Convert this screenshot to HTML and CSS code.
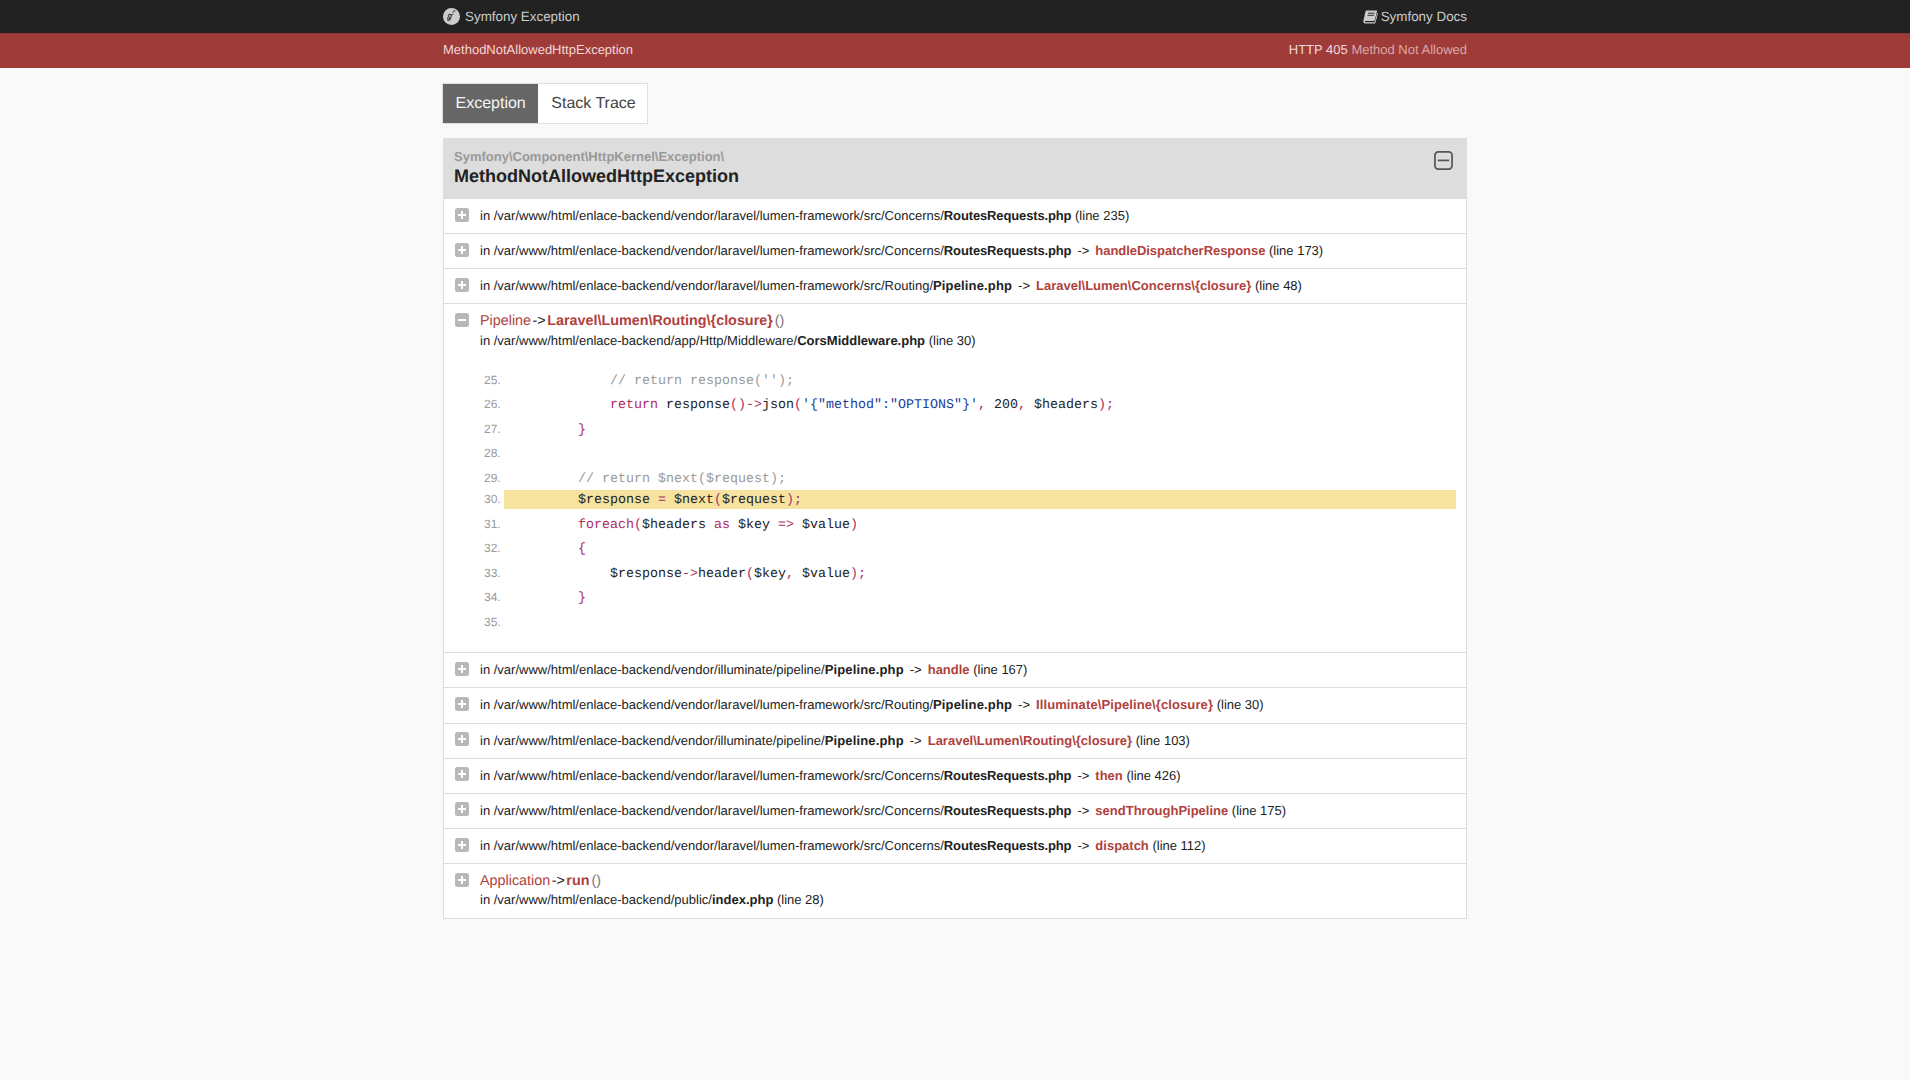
FILE: index.html
```html
<!DOCTYPE html>
<html lang="en">
<head>
<meta charset="utf-8">
<title>Symfony Exception</title>
<link rel="stylesheet" href="styles.css">
</head>
<body>
<div class="page">
<header class="top">
  <div class="container between">
    <span class="brand">
      <svg class="sf" viewBox="0 0 32 32"><circle cx="16" cy="16" r="16" fill="#ccc"/><path d="M23.6 5.600c-1.900.1-3.500.9-4.600 2.300-1.300 1.400-2.100 3.200-2.700 5-1.100-.9-1.900-1.500-3-1.700-.9-.2-1.800-.1-2.500.4-.8.6-1.200 1.400-1.400 2.300-.2 1 .2 2 .7 2.800l1 1.200c.3.3.6.7.4 1.300-.2.7-.9 1.100-1.700 1-.7-.2-.9-.6-.4-1.300.2-.3.5-.4.4-.7-.1-.4-.9-.4-1.300-.1-.9.6-1 1.800-.5 2.600.6 1 2.100 1.300 3.200.8 1.400-.6 2.200-2.300 1.700-3.700-.3-1-1.200-1.600-1.800-2.500-.4-.6-.7-1.500-.2-2.200.3-.4.9-.7 1.500-.5.8.2 1.600 1 2.400 1.800-.6 2.200-1.100 4.400-2 6.400-.6 1.400-1.200 3-2.900 3.200-.2 0-.2-.2-.2-.4.1-.5.3-.7-.1-1-.4-.3-1-.1-1.200.4-.2.7.5 1.400 1.500 1.400 1.600 0 2.900-1.100 3.700-2.400 1.100-1.700 1.700-3.700 2.300-5.700.4-1.300.7-2.600 1-3.900h2.700c.5 0 .8-.3.8-.7h-3.200c.4-1.800 1-3.700 1.900-5.200.4-.7 1-1.400 1.800-1.600.5-.1.7.1.6.5-.1.4-.3.6 0 .9.4.4 1.100.2 1.400-.3.3-.9-.6-1.500-1.600-1.400z" fill="#222" stroke="#222" stroke-width=".3"/></svg>
      <span>Symfony Exception</span>
    </span>
    <span class="brand docs">
      <svg class="book" viewBox="0 0 15 14"><path d="M3.600.5h9.600c.7 0 1 .5.8 1.100l-2.200 8.300c-.2.700-.6 1-1.300 1H2.600c-.6 0-.9.300-.8.700.1.400.4.600.9.600h8.500c.4 0 .6-.2.700-.5l2.300-8.700.7.500-2.300 8.700c-.2.800-.7 1.300-1.500 1.300H2.500C1.200 13.500.2 12.500.3 11.200c0-.2 0-.4.1-.6L2.400 1.700C2.600 1 3 .5 3.600.5z" fill="#ccc"/><path d="M5 3.200h6.600M4.500 5.300h6.600" stroke="#222" stroke-width=".9"/></svg>
      <span>Symfony Docs</span>
    </span>
  </div>
</header>
<div class="summary">
  <div class="container between">
    <span>MethodNotAllowedHttpException</span>
    <span>HTTP 405 <span class="status">Method Not Allowed</span></span>
  </div>
</div>
<main class="container">
  <nav class="tabs">
    <span class="tab active">Exception</span>
    <span class="tab">Stack Trace</span>
  </nav>
  <section class="trace">
    <div class="trace-head">
      <div>
        <div class="ns">Symfony\Component\HttpKernel\Exception\</div>
        <div class="cls">MethodNotAllowedHttpException</div>
      </div>
      <svg class="toggle-all" viewBox="0 0 20 20"><rect x="1" y="1" width="18" height="18" rx="3.500" fill="none" stroke="#555" stroke-width="1.800"/><rect x="4" y="9" width="12" height="1.800" fill="#555"/></svg>
    </div>

    <div class="row"><span class="ico plus"></span><div class="line">in /var/www/html/enlace-backend/vendor/laravel/lumen-framework/src/Concerns/<b class="routes">RoutesRequests.php</b> (line 235)</div></div>
    <div class="row"><span class="ico plus"></span><div class="line">in /var/www/html/enlace-backend/vendor/laravel/lumen-framework/src/Concerns/<b class="routes">RoutesRequests.php</b><span class="arrow">-&gt;</span><b class="fn tight">handleDispatcherResponse</b> (line 173)</div></div>
    <div class="row"><span class="ico plus"></span><div class="line">in /var/www/html/enlace-backend/vendor/laravel/lumen-framework/src/Routing/<b class="pipe">Pipeline.php</b><span class="arrow">-&gt;</span><b class="fn">Laravel\Lumen\Concerns\{closure}</b> (line 48)</div></div>

    <div class="row open"><span class="ico minus"></span>
      <div class="body">
        <div class="call"><span class="cl">Pipeline</span><span class="ar">-&gt;</span><b class="fn">Laravel\Lumen\Routing\{closure}</b><span class="pa">()</span></div>
        <div class="line">in /var/www/html/enlace-backend/app/Http/Middleware/<b>CorsMiddleware.php</b> (line 30)</div>
        <ol class="code" start="25">
          <li><code class="c">            // return response('');</code></li>
          <li><code>            <i>return</i> response<i>()-&gt;</i>json<i>(</i><u>'{"method":"OPTIONS"}'</u><i>,</i> 200<i>,</i> $headers<i>);</i></code></li>
          <li><code>        <i>}</i></code></li>
          <li><code> </code></li>
          <li class="before-sel"><code class="c">        // return $next($request);</code></li>
          <li class="sel"><code>        $response <i>=</i> $next<i>(</i>$request<i>);</i></code></li>
          <li><code>        <i>foreach(</i>$headers <i>as</i> $key <i>=&gt;</i> $value<i>)</i></code></li>
          <li><code>        <i>{</i></code></li>
          <li><code>            $response<i>-&gt;</i>header<i>(</i>$key<i>,</i> $value<i>);</i></code></li>
          <li><code>        <i>}</i></code></li>
          <li><code> </code></li>
        </ol>
      </div>
    </div>

    <div class="row"><span class="ico plus"></span><div class="line">in /var/www/html/enlace-backend/vendor/illuminate/pipeline/<b class="pipe">Pipeline.php</b><span class="arrow">-&gt;</span><b class="fn">handle</b> (line 167)</div></div>
    <div class="row"><span class="ico plus"></span><div class="line">in /var/www/html/enlace-backend/vendor/laravel/lumen-framework/src/Routing/<b class="pipe">Pipeline.php</b><span class="arrow">-&gt;</span><b class="fn wide">Illuminate\Pipeline\{closure}</b> (line 30)</div></div>
    <div class="row"><span class="ico plus"></span><div class="line">in /var/www/html/enlace-backend/vendor/illuminate/pipeline/<b class="pipe">Pipeline.php</b><span class="arrow">-&gt;</span><b class="fn">Laravel\Lumen\Routing\{closure}</b> (line 103)</div></div>
    <div class="row"><span class="ico plus"></span><div class="line">in /var/www/html/enlace-backend/vendor/laravel/lumen-framework/src/Concerns/<b class="routes">RoutesRequests.php</b><span class="arrow">-&gt;</span><b class="fn">then</b> (line 426)</div></div>
    <div class="row"><span class="ico plus"></span><div class="line">in /var/www/html/enlace-backend/vendor/laravel/lumen-framework/src/Concerns/<b class="routes">RoutesRequests.php</b><span class="arrow">-&gt;</span><b class="fn">sendThroughPipeline</b> (line 175)</div></div>
    <div class="row"><span class="ico plus"></span><div class="line">in /var/www/html/enlace-backend/vendor/laravel/lumen-framework/src/Concerns/<b class="routes">RoutesRequests.php</b><span class="arrow">-&gt;</span><b class="fn">dispatch</b> (line 112)</div></div>
    <div class="row"><span class="ico plus"></span>
      <div class="body">
        <div class="call"><span class="cl">Application</span><span class="ar">-&gt;</span><b class="fn">run</b><span class="pa">()</span></div>
        <div class="line">in /var/www/html/enlace-backend/public/<b>index.php</b> (line 28)</div>
      </div>
    </div>
  </section>
</main>
</div>
</body>
</html>
```
FILE: styles.css
```css
* { box-sizing: border-box; }
html { background: #fff; }
body {
  margin: 0;
  padding-right: 10px;
  font: 13px/1.4 "Liberation Sans", Arial, sans-serif;
  color: #222;
  text-rendering: geometricPrecision;
}
.page { min-height: 1080px; background: #f9f9f9; }
.container { width: 1024px; margin: 0 auto; }
.between { display: flex; justify-content: space-between; align-items: center; height: 100%; }

.top { height: 33px; padding-top: 1px; background: #222; color: #ccc; font-size: 13.400px; }
.brand { display: flex; align-items: center; gap: 5px; }
.docs { gap: 3px; }
.sf { width: 17px; height: 17px; }
.book { width: 15px; height: 14px; }

.summary { height: 35px; padding-bottom: 1px; background: #9f3c3a; border-top: 1px solid #8f3735; color: #f0d8d8; }
.status { color: #d9a8a7; }

.tabs { display: inline-flex; margin: 15px 0 0 -1px; border: 1px solid #e0e0e0; background: #fff; vertical-align: top; }
.tab { padding: 0 11.500px 0 13px; height: 39px; font-size: 16px; line-height: 40px; color: #444; }
.tab.active { padding: 0 12.500px; background: #666; color: #f5f5f5; }

.trace { margin-top: 14px; background: #fff; border: 1px solid #ddd; border-top: 0; }
.trace-head { display: flex; justify-content: space-between; height: 61px; margin: 0 -1px; padding: 10px 14px 11px 11px; background: #ddd; }
.ns { font-size: 13px; font-weight: bold; color: #999; line-height: 17px; }
.cls { font-size: 18px; font-weight: bold; color: #222; line-height: 22px; }
.toggle-all { width: 19px; height: 19px; margin-top: 2.500px; }

.row { display: flex; gap: 11px; padding: 7px 10px 8px 11px; border-top: 1px solid #ddd; }
.trace-head + .row { border-top: 0; }
.ico { position: relative; flex: none; width: 14px; height: 14px; margin-top: 1.500px; border-radius: 2.500px; background: #b8b8b8; }
.ico::before { content: ""; position: absolute; left: 3px; top: 6px; width: 8px; height: 2px; background: #fff; }
.plus::after { content: ""; position: absolute; left: 6px; top: 3px; width: 2px; height: 8px; background: #fff; }
.line { line-height: 19.150px; }
.arrow { margin: 0 6px; }
.routes { letter-spacing: -.136px; }
.pipe { letter-spacing: .15px; }
.tight { letter-spacing: -.05px; }
.wide { letter-spacing: .1px; }
.fn { color: #b0413e; }
.body { flex: 1; min-width: 0; }
.call { margin: 1px 0 -1px; font-size: 14.350px; line-height: 19.150px; }
.cl { color: #b0413e; }
.ar { margin: 0 1.500px; color: #222; }
.pa { margin-left: 2px; color: #777; }

.code { margin: 18px 0 10px; padding: 0 0 0 24px; list-style: decimal; color: #999; font-size: 12px; }
.code li { height: 24.500px; line-height: 24.500px; }
.code li.before-sel { height: 22.500px; }
.code li.sel { height: 23.500px; line-height: 22px; }
.code code { display: block; padding-left: 10px; font-family: "Liberation Mono", monospace; font-size: 13.333px; line-height: inherit; white-space: pre; color: #222; }
.code li.sel code { background: #f6e39f; height: 19px; }
.code code.c { color: #999; }
.code i { font-style: normal; color: #ad2b66; }
.code u { text-decoration: none; color: #1a3c9a; }
```
